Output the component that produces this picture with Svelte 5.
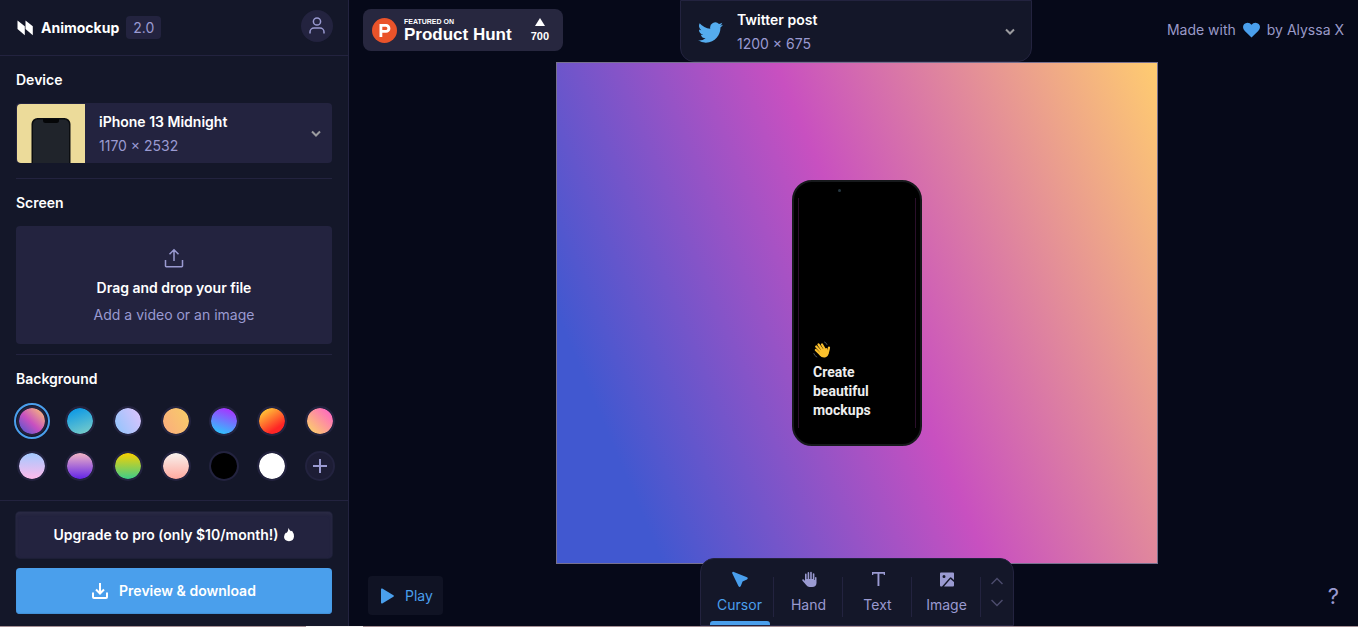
<script lang="ts">
	const backgrounds = [
		{ name: 'Sunset', fill: 'linear-gradient(43deg, #4158d0 0%, #c850c0 46%, #ffcc70 100%)' },
		{ name: 'Lagoon', fill: 'linear-gradient(160deg, #0093e9 0%, #80d0c7 100%)' },
		{ name: 'Lilac', fill: 'linear-gradient(62deg, #8ec5fc 0%, #e0c3fc 100%)' },
		{ name: 'Peach', fill: 'linear-gradient(62deg, #fbab7e 0%, #f7ce68 100%)' },
		{ name: 'Electric', fill: 'linear-gradient(19deg, #21d4fd 0%, #b721ff 100%)' },
		{ name: 'Fire', fill: 'linear-gradient(147deg, #ffe53b 0%, #ff2525 74%)' },
		{ name: 'Candy', fill: 'linear-gradient(45deg, #fbda61 0%, #ff5acd 100%)' },
		{ name: 'Cotton', fill: 'linear-gradient(0deg, #ffbbec 0%, #a3c9ff 100%)' },
		{ name: 'Grape', fill: 'linear-gradient(180deg, #f2b5c5 0%, #6324e8 100%)' },
		{ name: 'Lime', fill: 'linear-gradient(180deg, #fad000 0%, #3ecd8a 100%)' },
		{ name: 'Blush', fill: 'linear-gradient(180deg, #f8f2ee 0%, #ffa99f 100%)' },
		{ name: 'Black', fill: '#000000' },
		{ name: 'White', fill: '#ffffff' }
	];

	const tools = ['Cursor', 'Hand', 'Text', 'Image'];

	let background = $state('Sunset');
	let tool = $state('Cursor');
</script>

<style>
	:global(body) {
		background: #060919;
	}

	.app {
		display: flex;
		flex-direction: column;
		min-height: 100vh;
		box-sizing: border-box;
		font-family: Inter, sans-serif;
		font-size: 14px;
		line-height: 16px;
		color: #fff;
	}

	.app * {
		box-sizing: border-box;
	}

	.workspace {
		display: flex;
		flex: 1;
	}

	.strip {
		height: 1px;
		background: linear-gradient(90deg, #a58f94 0 306px, #f4f1f1 306px 363px, #a58f94 363px);
	}

	button,
	select {
		font: inherit;
		color: inherit;
		border: 0;
		background: none;
		padding: 0;
		margin: 0;
	}

	button,
	select,
	.drop,
	.swatch {
		cursor: pointer;
	}

	svg {
		display: block;
		flex: none;
	}

	h2 {
		margin: 0;
		font-size: 14px;
		font-weight: 600;
	}

	.hidden {
		position: absolute;
		width: 1px;
		height: 1px;
		opacity: 0;
	}

	/* sidebar */
	.sidebar {
		display: flex;
		flex-direction: column;
		width: 349px;
		flex: none;
		background: #141729;
		border-right: 1px solid #23233f;
	}

	header {
		display: flex;
		align-items: center;
		height: 56px;
		padding: 0 15px 0 17px;
		border-bottom: 1px solid #23233f;
	}

	.brand {
		margin-left: 8px;
		font-weight: 700;
	}

	.version {
		margin-left: 7px;
		padding: 4px 7px 3px;
		border-radius: 4px;
		background: #23233f;
		color: #9a9ad1;
	}

	.account {
		display: grid;
		place-items: center;
		width: 32px;
		height: 32px;
		margin: 0 0 4px auto;
		border-radius: 50%;
		background: #23233f;
	}

	section {
		margin: 0 16px;
		padding: 16px 0 15px;
		border-bottom: 1px solid #23233f;
	}

	section.screen {
		padding-bottom: 10px;
	}

	section.backgrounds {
		flex: 1;
		border-bottom: 0;
	}

	.picker {
		display: flex;
		align-items: center;
	}

	.picker .info {
		display: flex;
		flex-direction: column;
		flex: 1;
		gap: 8px;
	}

	.picker select {
		appearance: none;
		width: 100%;
		height: 16px;
		font-weight: 600;
		outline: none;
	}

	.picker option {
		background: #23233f;
	}

	.size {
		color: #9a9ad1;
	}

	.device {
		height: 60px;
		margin-top: 15px;
		padding: 1px 10px 0 1px;
		border-radius: 4px;
		background: #23233f;
		overflow: hidden;
	}

	.device .info {
		margin-left: 14px;
	}

	.drop {
		display: flex;
		flex-direction: column;
		align-items: center;
		height: 118px;
		margin-top: 15px;
		padding-top: 22px;
		border-radius: 4px;
		background: #23233f;
	}

	.drop strong {
		margin-top: 12px;
		font-weight: 600;
	}

	.drop span {
		margin-top: 11px;
		color: #9a9ad1;
	}

	.swatches {
		display: grid;
		grid-template-columns: repeat(7, 32px);
		gap: 13px 16px;
		margin-top: 18px;
	}

	.swatch {
		appearance: none;
		width: 30px;
		height: 30px;
		margin: 1px;
		border: 2px solid #23233f;
		border-radius: 50%;
		background: var(--fill);
		background-clip: padding-box;
	}

	.swatch:checked {
		outline: 2px solid #4a9fec;
		outline-offset: 1px;
	}

	.swatch.add {
		display: grid;
		place-items: center;
		background: #1d1d35;
	}

	footer {
		display: flex;
		flex-direction: column;
		gap: 10px;
		padding: 11px 16px 12px;
		border-top: 1px solid #23233f;
	}

	.wide {
		display: flex;
		align-items: center;
		justify-content: center;
		height: 46px;
		border-radius: 4px;
		font-weight: 600;
	}

	.upgrade {
		gap: 6px;
		background: #23233f;
		box-shadow: inset 0 2px 3px #2b2b45, 0 0 0 1px #1d1f36;
	}

	.download {
		gap: 11px;
		background: #4a9fec;
		box-shadow: inset 0 -1px 1px #428fd6;
	}

	/* stage */
	main {
		display: flex;
		flex-direction: column;
		flex: 1;
	}

	.bar {
		display: grid;
		grid-template-columns: 1fr auto 1fr;
		padding: 0 14px;
	}

	.hunt {
		display: flex;
		align-items: center;
		justify-self: start;
		width: 200px;
		height: 42px;
		margin-top: 9px;
		padding: 0 14px 0 9px;
		border-radius: 8px;
		background: #27273f;
		color: #fff;
		font-family: "Liberation Sans", Arial, sans-serif;
		font-weight: 700;
		text-decoration: none;
	}

	.hunt .name {
		display: flex;
		flex-direction: column;
		flex: 1;
		margin-left: 7px;
		font-size: 17px;
		line-height: 17px;
	}

	.hunt small {
		font-size: 7px;
		line-height: 8px;
	}

	.hunt .votes {
		display: flex;
		flex-direction: column;
		align-items: center;
		gap: 4px;
		font-size: 11px;
		line-height: 12px;
	}

	.format {
		width: 352px;
		height: 62px;
		margin-left: 5px;
		padding: 2px 15px 0 17px;
		border: 1px solid #23233f;
		border-radius: 0 0 14px 14px;
		background: #141729;
	}

	.format .info {
		margin-left: 14px;
	}

	.credit {
		display: flex;
		align-items: center;
		justify-self: end;
		gap: 7px;
		height: 59px;
		color: #9a9ac8;
		text-decoration: none;
	}

	.canvas {
		display: flex;
		align-items: center;
		justify-content: center;
		align-self: center;
		flex: 1;
		aspect-ratio: 6 / 5;
		margin-left: 7px;
		border: 1px solid #77718f;
		background: linear-gradient(67deg, #4158d0 13%, #c850c0 53%, #ffcc70 100%);
	}

	.phone {
		display: flex;
		flex-direction: column;
		width: 130px;
		height: 266px;
		border: 2px solid #17191c;
		border-radius: 20px;
		background: #000;
	}

	.display {
		display: flex;
		flex-direction: column;
		justify-content: flex-end;
		flex: 1;
		margin: 16px 4px;
		padding: 0 14px 8px;
		border: 1px solid #2a0f2a;
		border-width: 0 1px;
		color: #eee;
		font-family: Roboto, sans-serif;
		font-weight: 700;
		line-height: 19px;
	}

	.camera {
		width: 3px;
		height: 3px;
		margin: 7px 0 -10px 44px;
		border-radius: 50%;
		background: #263640;
	}

	.display p {
		margin: 4px 0 0;
	}

	.bottom {
		align-items: end;
		margin-top: -6px;
	}

	.play {
		display: flex;
		align-items: center;
		gap: 11px;
		width: 75px;
		height: 39px;
		margin: 0 0 11px 5px;
		padding-left: 13px;
		border-radius: 4px;
		background: #101324;
		color: #4a9fec;
	}

	.tools {
		display: flex;
		height: 68px;
		margin-left: 7px;
		padding-left: 4px;
		border: 1px solid #23233f;
		border-radius: 14px 14px 0 0;
		background: #141729;
	}

	.tool {
		display: flex;
		flex-direction: column;
		align-items: center;
		width: 69px;
		padding-top: 12px;
		color: #9a9ad1;
		background: linear-gradient(#23233f, #23233f) right 18px / 1px 40px no-repeat;
	}

	.tool span {
		margin-top: 9px;
	}

	.tool i {
		width: 60px;
		height: 4px;
		margin-top: auto;
		border-radius: 3px 3px 0 0;
	}

	.tool.active {
		color: #4a9fec;
	}

	.tool.active i {
		background: #4a9fec;
	}

	.zoom {
		display: flex;
		flex-direction: column;
		align-items: center;
		justify-content: center;
		gap: 14px;
		width: 32px;
	}

	.help {
		justify-self: end;
		margin: 0 5px 18px 0;
		color: #9a9ad1;
		font-size: 22px;
		line-height: 24px;
	}
</style>

{#snippet chevron()}
	<svg width="12" height="8" viewBox="0 0 12 8" fill="none" stroke="#9b9b9f" stroke-width="2">
		<path d="M2 1.5 6 5.5 10 1.5" />
	</svg>
{/snippet}

<div class="app">
	<div class="workspace">
		<aside class="sidebar">
			<header>
				<svg width="16" height="16" viewBox="0 0 16 16" fill="#fff">
					<path d="M.5.5 7.800 6.300V15.300L.5 9zM8.500.5 15.800 6.300V15.300L8.500 9z" />
				</svg>
				<span class="brand">Animockup</span>
				<span class="version">2.0</span>
				<button class="account" aria-label="Account">
					<svg width="18" height="20" viewBox="0 0 18 20" fill="none" stroke="#9a9ad1" stroke-width="1.5">
						<circle cx="9" cy="5.500" r="3.600" />
						<path d="M2 17.500v-1.500a4 4 0 0 1 4-4h6a4 4 0 0 1 4 4v1.500" />
					</svg>
				</button>
			</header>

			<section>
				<h2>Device</h2>
				<div class="picker device">
					<svg width="68" height="59" viewBox="0 0 68 59">
						<path d="M4 0h64v59H4q-4 0-4-4V4q0-4 4-4z" fill="#ecdb9a" />
						<rect x="14.500" y="14" width="39" height="60" rx="6" fill="#0b0d10" />
						<rect x="16" y="15.500" width="36" height="60" rx="5" fill="#20242b" />
						<path d="M26 15h16v1.500q0 2.500-2.500 2.500h-11q-2.500 0-2.500-2.500z" fill="#050608" />
					</svg>
					<div class="info">
						<select aria-label="Device">
							<option>iPhone 13 Midnight</option>
						</select>
						<span class="size">1170 × 2532</span>
					</div>
					{@render chevron()}
				</div>
			</section>

			<section class="screen">
				<h2>Screen</h2>
				<label class="drop">
					<input class="hidden" type="file" accept="video/*,image/*" />
					<svg width="20" height="20" viewBox="0 0 20 20" fill="none" stroke="#9a9ad1" stroke-width="1.500">
						<path d="M10 13V2M5.500 6.200 10 1.700l4.500 4.500M1.500 12v6q0 .7.7.7h15.600q.7 0 .7-.7v-6" />
					</svg>
					<strong>Drag and drop your file</strong>
					<span>Add a video or an image</span>
				</label>
			</section>

			<section class="backgrounds">
				<h2>Background</h2>
				<div class="swatches">
					{#each backgrounds as item}
						<input
							class="swatch"
							type="radio"
							name="background"
							value={item.name}
							aria-label={item.name}
							bind:group={background}
							style="--fill: {item.fill}"
						/>
					{/each}
					<button class="swatch add" aria-label="Add background">
						<svg width="14" height="14" viewBox="0 0 14 14" stroke="#9a9ad1" stroke-width="2">
							<path d="M7 0v14M0 7h14" />
						</svg>
					</button>
				</div>
			</section>

			<footer>
				<button class="wide upgrade">
					Upgrade to pro (only $10/month!)
					<svg width="10" height="14" viewBox="0 0 10 14" fill="#fff">
						<path d="M4.500 0Q5.500 2.500 7 3.200L8 2.800Q10 5.500 10 8.500Q9.600 13 5 13.200Q.4 13 0 9Q.2 6 2 4.500L2.700 5Q4.300 3 4.500 0z" />
					</svg>
				</button>
				<button class="wide download">
					<svg width="16" height="16" viewBox="0 0 16 16" fill="none" stroke="#fff" stroke-width="2">
						<path d="M8 0v10M4 6.500l4 4 4-4M1 9.500V14q0 1 1 1h12q1 0 1-1V9.500" />
					</svg>
					Preview &amp; download
				</button>
			</footer>
		</aside>

		<main>
			<div class="bar">
				<a class="hunt" href="#product-hunt">
					<svg width="25" height="25" viewBox="0 0 25 25">
						<circle cx="12.500" cy="12.500" r="12.500" fill="#ea532a" />
						<path
							d="M7.500 6h6.500a4.400 4.400 0 0 1 0 8.800h-3.700V19H7.500zM10.300 8.800v3.200h3.500a1.600 1.600 0 0 0 0-3.200z"
							fill="#fff"
							fill-rule="evenodd"
						/>
					</svg>
					<span class="name"><small>FEATURED ON</small>Product Hunt</span>
					<span class="votes">
						<svg width="10" height="8" viewBox="0 0 10 8" fill="#fff"><path d="M5 0l5 8H0z" /></svg>
						700
					</span>
				</a>

				<div class="picker format">
					<svg width="25" height="21" viewBox="0 0 24 20" fill="#55acee">
						<path
							d="M23.950 2.570a10 10 0 0 1-2.820.770 4.960 4.960 0 0 0 2.160-2.720 9.900 9.900 0 0 1-3.120 1.190 4.920 4.920 0 0 0-8.380 4.480A13.940 13.940 0 0 1 1.640 1.160a4.920 4.920 0 0 0 1.520 6.570 4.900 4.900 0 0 1-2.230-.610v.060a4.920 4.920 0 0 0 3.950 4.830 4.960 4.960 0 0 1-2.210.080 4.940 4.940 0 0 0 4.600 3.420A9.870 9.870 0 0 1 0 17.540a13.990 13.990 0 0 0 7.550 2.210c9.050 0 14-7.500 14-13.980 0-.210 0-.420-.020-.630a9.940 9.940 0 0 0 2.460-2.550z"
						/>
					</svg>
					<div class="info">
						<select aria-label="Format">
							<option>Twitter post</option>
						</select>
						<span class="size">1200 × 675</span>
					</div>
					{@render chevron()}
				</div>

				<a class="credit" href="#credit">
					Made with
					<svg width="17" height="16" viewBox="0 0 17 16" fill="#4a9fec">
						<path d="M8.500 15.500 1.800 9Q0 7 0 5Q.3 1 4.500.700Q7 .700 8.500 2.800Q10 .700 12.500.700Q16.700 1 17 5Q17 7 15.200 9z" />
					</svg>
					by Alyssa X
				</a>
			</div>

			<div class="canvas">
				<div class="phone">
					<div class="camera"></div>
					<div class="display">
						<svg width="18" height="18" viewBox="0 0 18 18" fill="none" stroke-linecap="round">
							<path d="M7.500 9 14 7l1.500 4.500q.3 4-3.500 5Q8.500 17 6.500 14z" fill="#fbc02d" />
							<path
								d="M8 14 2.800 9M9 12 3.200 5.500M10.500 10.500 5.500 3.500M12.500 9.500 9 3.500M14.500 12.500q1-3 1.500-6"
								stroke="#fbc02d"
								stroke-width="2.200"
							/>
							<path d="M11.500 1q2 .7 2.500 2.500M.8 12.500q.7 2.500 3 3.500" stroke="#4b5156" />
						</svg>
						<p>Create<br />beautiful<br />mockups</p>
					</div>
				</div>
			</div>

			<div class="bar bottom">
				<button class="play">
					<svg width="13" height="16" viewBox="0 0 13 16" fill="#4a9fec">
						<path d="M0 1.200Q.1 0 1.300.6L12.400 7.300Q13.300 8 12.400 8.700L1.300 15.400Q.1 16 0 14.800z" />
					</svg>
					Play
				</button>

				<nav class="tools">
					{#each tools as name}
						<button class="tool" class:active={tool === name} aria-pressed={tool === name} onclick={() => (tool = name)}>
							<svg width="16" height="17" viewBox="0 0 16 17" fill="currentColor">
								{#if name === 'Cursor'}
									<path d="M.2 2.200Q0 .500 1.800.900L15 6.200Q16.600 7.300 15 8.500L10.600 10.400 8.800 15Q7.600 16.800 6.400 15z" />
								{:else if name === 'Hand'}
									<path
										d="M4 10V3.400a.8.800 0 0 1 1.600 0V8h1V1.900a.8.800 0 0 1 1.600 0V8h1V1.600a.8.800 0 0 1 1.600 0V8h1V3a.8.800 0 0 1 1.600 0v6h.6V6.400a.8.800 0 0 1 1.500 0V12q-.2 4-4.300 4H8.500Q6.500 16 5.400 14.300L1.300 9.600q-.4-1.100.6-1.400Q3 8 4 10z"
									/>
								{:else if name === 'Text'}
									<path d="M2 1h13v3h-1.300V2.700H9.400V15H7.500V2.700H3.300V4H2z" />
								{:else}
									<path
										fill-rule="evenodd"
										d="M2 1.500h12q1 0 1 1V9L12.200 6.600Q11.500 6 10.800 6.700L3 15.500H2q-1 0-1-1v-12q0-1 1-1zM5 4a1.500 1.500 0 1 0 0 3 1.500 1.500 0 0 0 0-3zM15 11v3.500q0 1-1 1H5L11.500 8z"
									/>
								{/if}
							</svg>
							<span>{name}</span>
							<i></i>
						</button>
					{/each}
					<div class="zoom">
						<button aria-label="Zoom in">
							<svg width="12" height="8" viewBox="0 0 12 8" fill="none" stroke="#4b4b6c" stroke-width="1.500">
								<path d="M.5 7 6 1.500 11.500 7" />
							</svg>
						</button>
						<button aria-label="Zoom out">
							<svg width="12" height="8" viewBox="0 0 12 8" fill="none" stroke="#4b4b6c" stroke-width="1.500">
								<path d="M.5 1 6 6.500 11.500 1" />
							</svg>
						</button>
					</div>
				</nav>

				<button class="help" aria-label="Help">?</button>
			</div>
		</main>
	</div>
	<div class="strip"></div>
</div>
